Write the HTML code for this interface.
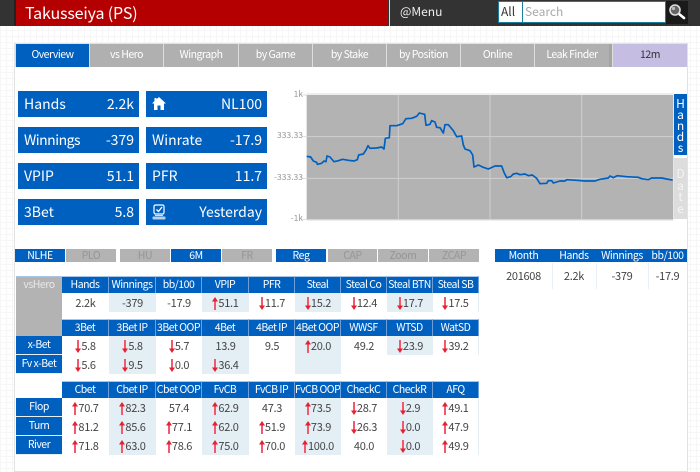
<!DOCTYPE html>
<html><head><meta charset="utf-8">
<style>
html,body{margin:0;padding:0}
body{width:700px;height:472px;overflow:hidden;position:relative;background-color:#fff;
background-image:linear-gradient(#f6f6f6 1px,transparent 1px),linear-gradient(90deg,#f6f6f6 1px,transparent 1px);background-size:6px 6px;
font-family:"Noto Sans CJK JP","Liberation Sans",sans-serif;color:#444}
div,svg,table{position:absolute}
.f{line-height:14px;text-align:center;font-size:10.5px;letter-spacing:-.4px;color:#fff;height:13px;top:249px}
.g{background:#b3b3b3;color:#969696}.b{background:#0060c0}
.tab{top:44px;height:23px;line-height:22px;text-align:center;font-size:10.5px;letter-spacing:-.5px;color:#fff;background:#b0b0b0}
.st{width:121px;height:26px;background:#0060c0;color:#fff;font-size:14px;line-height:26px}
.st span{position:absolute;left:6px}.st i{position:absolute;right:5px;font-style:normal}
.tk{font-size:8.5px;color:#999;line-height:10px;text-align:right;right:397px}
table{border-collapse:separate;border-spacing:0;table-layout:fixed;left:16px;width:463px;font-size:11px;letter-spacing:-.3px;line-height:14px;text-align:center}
th{font-weight:400;color:#fff;background:#0060c0;border-right:1px solid #6f9fd8;border-top:1px solid #a9c6e8;padding:0;height:16px;overflow:hidden;white-space:nowrap;font-size:10.5px;letter-spacing:-.5px}
th.l{background:#b3b3b3;color:#e8e8e8;vertical-align:top;border-right:0;padding-top:1px;height:auto}
th.r{border-top:0;border-bottom:1px solid #e8f0f6;height:18px;border-right:0}
td{padding:0;height:19px;color:#444;overflow:hidden;white-space:nowrap;vertical-align:middle}
tr.d td:nth-child(odd),tr.e td:nth-child(even){background:#e3eef5}
tr.d td:last-child,tr.e td:last-child{border-right:1px solid #e3eef5}
td svg{position:static;vertical-align:-3px}
col{width:46px}col.w{width:47px}
</style></head><body>
<svg width="0" height="0" style="position:absolute"><defs>
<symbol id="dn" viewBox="0 0 6 13"><path d="M3 0V10" stroke="#f2596c" stroke-width="2"/><path d="M0 8.5H6L3 13Z" fill="#e5202f"/></symbol>
<symbol id="up" viewBox="0 0 6 13"><path d="M3 3V13" stroke="#f2596c" stroke-width="2"/><path d="M0 4.5H6L3 0Z" fill="#e5202f"/></symbol>
</defs></svg>

<div style="left:0;top:0;width:700px;height:26px;background:#333"></div>
<div style="left:16px;top:0;width:372px;height:26px;background:#b40000;color:#fff;font-size:16px;letter-spacing:-.15px;line-height:24px;padding-left:9px;box-sizing:border-box">Takusseiya (PS)</div>
<div style="left:14px;top:0;width:2px;height:26px;background:#222"></div>
<div style="left:389px;top:0;width:1px;height:26px;background:#ddd"></div>
<div style="left:400px;top:3px;color:#eee;font-size:12px;line-height:18px">@Menu</div>
<div style="left:498px;top:1px;width:25px;height:22px;background:#fff;border:1px solid #1a7f9c;box-sizing:border-box;color:#333;font-size:12px;line-height:20px;padding-left:2px">All</div>
<div style="left:523px;top:1px;width:143px;height:22px;background:#fff;border:1px solid #1a7f9c;border-left:0;box-sizing:border-box;color:#aaa;font-size:12px;line-height:20px;padding-left:2px">Search</div>
<div style="left:666px;top:1px;width:22px;height:23px;background:#1a1a1a"></div>
<svg style="left:668px;top:3px" width="18" height="18" viewBox="0 0 18 18"><path d="M10.5 10.5L16 15" stroke="#fff" stroke-width="2.6" stroke-linecap="round"/><circle cx="7" cy="7" r="5" fill="#666" stroke="#ddd" stroke-width="1.6"/><circle cx="5.5" cy="5.5" r="1.6" fill="#bbb"/></svg>

<div style="left:14px;top:43px;width:674px;height:429px;background:#fff;border:1px solid #e2e2e2;box-sizing:border-box"></div>
<div style="left:15px;top:44px;width:672px;height:23px;background:#ddd"></div>
<div class="tab" style="left:16px;width:73px;background:#0060c0">Overview</div>
<div class="tab" style="left:90px;width:73px">vs Hero</div>
<div class="tab" style="left:164px;width:74px">Wingraph</div>
<div class="tab" style="left:239px;width:73px">by Game</div>
<div class="tab" style="left:313px;width:73px">by Stake</div>
<div class="tab" style="left:387px;width:73px">by Position</div>
<div class="tab" style="left:461px;width:73px">Online</div>
<div class="tab" style="left:535px;width:74px">Leak Finder</div>
<div class="tab" style="left:609px;width:3px;background:#a4a4a4"></div>
<div class="tab" style="left:613px;width:74px;background:#c6bde3;color:#333">12m</div>

<div class="st" style="left:18px;top:91px"><span>Hands</span><i>2.2k</i></div>
<div class="st" style="left:146px;top:91px"><i>NL100</i><svg style="left:6px;top:6px" width="14" height="13" viewBox="0 0 14 13"><path d="M7 0L14 6.5H12V13H8.5V8.5H5.5V13H2V6.5H0L2.5 4V1H4.5V2.2Z" fill="#fff"/></svg></div>
<div class="st" style="left:18px;top:127px"><span style="letter-spacing:-.5px">Winnings</span><i>-379</i></div>
<div class="st" style="left:146px;top:127px"><span>Winrate</span><i>-17.9</i></div>
<div class="st" style="left:18px;top:163px"><span>VPIP</span><i>51.1</i></div>
<div class="st" style="left:146px;top:163px"><span>PFR</span><i>11.7</i></div>
<div class="st" style="left:18px;top:199px"><span>3Bet</span><i>5.8</i></div>
<div class="st" style="left:146px;top:199px"><i>Yesterday</i><svg style="left:6px;top:5px" width="14" height="16" viewBox="0 0 14 16"><rect x="2" y="1" width="10" height="9" rx="1.5" fill="none" stroke="#fff" stroke-width="1.2"/><path d="M4.5 5.5L6.5 7.5L10 3" fill="none" stroke="#fff" stroke-width="1.3"/><path d="M3 11.5H11" stroke="#cde" stroke-width="1"/><rect x="0.5" y="12.5" width="13" height="3" rx="1" fill="#b8d0ea"/></svg></div>

<div class="tk" style="top:89px">1k</div>
<div class="tk" style="top:130px">333.33</div>
<div class="tk" style="top:172px">-333.33</div>
<div class="tk" style="top:213px">-1k</div>
<svg style="left:280px;top:85px" width="420" height="145" viewBox="0 0 1260 435">
<path d="M80 30H1180V403H80Z" fill="#b3b3b3"/>
<path d="M355 30V403M630 30V403M905 30V403M80 155H1180M80 280H1180" stroke="#cfcfcf" stroke-width="3" fill="none"/>
<path d="M68 30H80M68 155H80M68 280H80M68 403H80M80 27H1180M80 405H1180" stroke="#ddd" stroke-width="3" fill="none"/>
<polyline fill="none" stroke="#0060c0" stroke-width="5" stroke-linejoin="round" points="80,214 92,216 100,228 110,232 112,238 125,235 132,228 138,230 141,213 150,216 155,222 162,230 175,227 188,223 205,226 222,228 232,224 236,210 250,207 258,195 264,182 270,190 290,189 305,186 312,192 316,160 328,158 330,122 350,122 368,116 378,101 395,100 410,94 418,84 434,88 438,121 450,118 455,107 465,111 470,127 480,128 490,144 495,119 505,119 520,137 530,155 545,153 550,180 555,192 570,197 578,210 582,246 595,240 610,247 625,252 645,243 665,243 672,262 680,278 692,275 700,267 710,265 720,269 735,267 745,272 757,270 770,280 780,296 800,295 805,287 815,287 820,294 840,288 855,288 860,284 890,286 915,288 945,288 960,283 985,279 990,273 1000,278 1012,272 1040,275 1075,277 1085,281 1105,284 1115,279 1145,279 1160,282 1178,285"/>
</svg>
<div style="left:674px;top:94px;width:13px;height:61px;background:#0060c0;color:#fff;font-size:12px;line-height:11px;text-align:center;padding-top:4px;box-sizing:border-box">H<br>a<br>n<br>d<br>s</div>
<div style="left:674px;top:158px;width:13px;height:61px;background:#ddd;color:#f4f4f4;font-size:12px;line-height:11.5px;text-align:center;padding-top:10px;box-sizing:border-box">D<br>a<br>t<br>e</div>

<div class="f b" style="left:15px;width:50px">NLHE</div>
<div class="f g" style="left:66px;width:50px">PLO</div>
<div class="f g" style="left:120px;width:50px">HU</div>
<div class="f b" style="left:171px;width:50px">6M</div>
<div class="f g" style="left:222px;width:50px">FR</div>
<div class="f b" style="left:276px;width:50px">Reg</div>
<div class="f g" style="left:328px;width:49px">CAP</div>
<div class="f g" style="left:378px;width:50px">Zoom</div>
<div class="f g" style="left:429px;width:50px">ZCAP</div>

<div class="f b" style="left:495px;width:192px"></div>
<div class="f" style="left:495px;width:57px">Month</div>
<div class="f" style="left:552px;width:44px">Hands</div>
<div class="f" style="left:596px;width:52px">Winnings</div>
<div class="f" style="left:648px;width:39px">bb/100</div>
<div style="left:552px;top:263px;width:1px;height:26px;background:#e8f0f6"></div>
<div style="left:596px;top:263px;width:1px;height:26px;background:#e8f0f6"></div>
<div style="left:648px;top:263px;width:1px;height:26px;background:#e8f0f6"></div>
<div style="left:495px;top:269px;width:57px;text-align:center;font-size:11px;letter-spacing:-.3px;line-height:14px">201608</div>
<div style="left:552px;top:269px;width:44px;text-align:center;font-size:11px;letter-spacing:-.3px;line-height:14px">2.2k</div>
<div style="left:596px;top:269px;width:52px;text-align:center;font-size:11px;letter-spacing:-.3px;line-height:14px">-379</div>
<div style="left:648px;top:269px;width:39px;text-align:center;font-size:11px;letter-spacing:-.3px;line-height:14px">-17.9</div>

<table style="top:276px"><colgroup><col><col class="w"><col class="w"><col><col class="w"><col><col><col><col><col></colgroup>
<tr><th class="l" rowspan="4">vsHero</th><th>Hands</th><th>Winnings</th><th>bb/100</th><th>VPIP</th><th>PFR</th><th>Steal</th><th>Steal Co</th><th>Steal BTN</th><th>Steal SB</th></tr>
<tr class="e"><td>2.2k</td><td>-379</td><td>-17.9</td><td><svg width="6" height="13"><use href="#up"/></svg>51.1</td><td><svg width="6" height="13"><use href="#dn"/></svg>11.7</td><td><svg width="6" height="13"><use href="#dn"/></svg>15.2</td><td><svg width="6" height="13"><use href="#dn"/></svg>12.4</td><td><svg width="6" height="13"><use href="#dn"/></svg>17.7</td><td><svg width="6" height="13"><use href="#dn"/></svg>17.5</td></tr>
<tr><td colspan="9" style="height:7px;line-height:0"></td></tr>
<tr><th>3Bet</th><th>3Bet IP</th><th>3Bet OOP</th><th>4Bet</th><th>4Bet IP</th><th>4Bet OOP</th><th>WWSF</th><th>WTSD</th><th>WatSD</th></tr>
<tr class="d"><th class="r">x-Bet</th><td><svg width="6" height="13"><use href="#dn"/></svg>5.8</td><td><svg width="6" height="13"><use href="#dn"/></svg>5.8</td><td><svg width="6" height="13"><use href="#dn"/></svg>5.7</td><td>13.9</td><td>9.5</td><td><svg width="6" height="13"><use href="#up"/></svg>20.0</td><td>49.2</td><td><svg width="6" height="13"><use href="#dn"/></svg>23.9</td><td><svg width="6" height="13"><use href="#dn"/></svg>39.2</td></tr>
<tr><th class="r">Fv x-Bet</th><td><svg width="6" height="13"><use href="#dn"/></svg>5.6</td><td style="background:#e3eef5"><svg width="6" height="13"><use href="#dn"/></svg>9.5</td><td><svg width="6" height="13"><use href="#dn"/></svg>0.0</td><td style="background:#e3eef5"><svg width="6" height="13"><use href="#dn"/></svg>36.4</td><td></td><td style="background:#e3eef5"></td><td colspan="3"></td></tr>
</table>

<table style="top:381px"><colgroup><col><col class="w"><col class="w"><col><col class="w"><col><col><col><col><col></colgroup>
<tr><td style="height:17px"></td><th>Cbet</th><th>Cbet IP</th><th>Cbet OOP</th><th>FvCB</th><th>FvCB IP</th><th>FvCB OOP</th><th>CheckC</th><th>CheckR</th><th>AFQ</th></tr>
<tr class="d"><th class="r">Flop</th><td><svg width="6" height="13"><use href="#up"/></svg>70.7</td><td><svg width="6" height="13"><use href="#up"/></svg>82.3</td><td>57.4</td><td><svg width="6" height="13"><use href="#up"/></svg>62.9</td><td>47.3</td><td><svg width="6" height="13"><use href="#up"/></svg>73.5</td><td><svg width="6" height="13"><use href="#dn"/></svg>28.7</td><td><svg width="6" height="13"><use href="#dn"/></svg>2.9</td><td><svg width="6" height="13"><use href="#up"/></svg>49.1</td></tr>
<tr class="d"><th class="r">Turn</th><td><svg width="6" height="13"><use href="#up"/></svg>81.2</td><td><svg width="6" height="13"><use href="#up"/></svg>85.6</td><td><svg width="6" height="13"><use href="#up"/></svg>77.1</td><td><svg width="6" height="13"><use href="#up"/></svg>62.0</td><td><svg width="6" height="13"><use href="#up"/></svg>51.9</td><td><svg width="6" height="13"><use href="#up"/></svg>73.9</td><td><svg width="6" height="13"><use href="#dn"/></svg>26.3</td><td><svg width="6" height="13"><use href="#dn"/></svg>0.0</td><td><svg width="6" height="13"><use href="#up"/></svg>47.9</td></tr>
<tr class="d"><th class="r">River</th><td><svg width="6" height="13"><use href="#up"/></svg>71.8</td><td><svg width="6" height="13"><use href="#up"/></svg>63.0</td><td><svg width="6" height="13"><use href="#up"/></svg>78.6</td><td><svg width="6" height="13"><use href="#up"/></svg>75.0</td><td><svg width="6" height="13"><use href="#up"/></svg>70.0</td><td><svg width="6" height="13"><use href="#up"/></svg>100.0</td><td>40.0</td><td><svg width="6" height="13"><use href="#dn"/></svg>0.0</td><td><svg width="6" height="13"><use href="#up"/></svg>49.9</td></tr>
</table>
</body></html>
